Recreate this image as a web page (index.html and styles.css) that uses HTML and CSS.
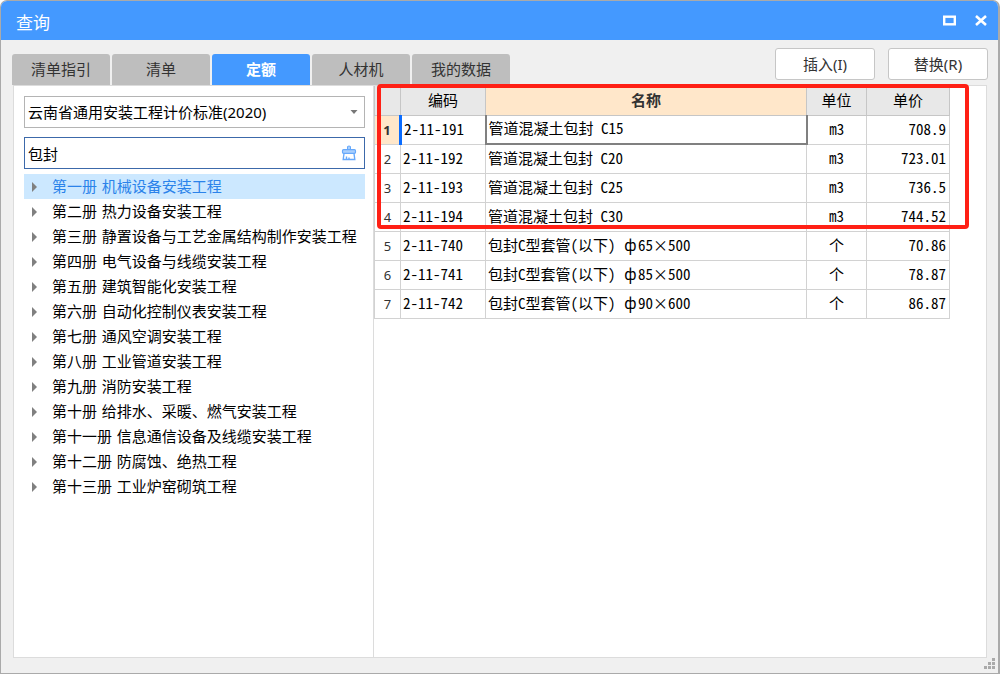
FILE: index.html
```html
<!DOCTYPE html>
<html lang="zh-CN">
<head>
<meta charset="utf-8">
<title>查询</title>
<link rel="stylesheet" href="styles.css">
</head>
<body>
<div class="window">
  <header class="titlebar">
    <h1 class="title">查询</h1>
    <div class="window-controls">
      <button class="control" type="button" aria-label="最大化"><svg width="14" height="14" viewBox="0 0 14 14"><rect x="2.200" y="2.700" width="10.600" height="7.600" fill="none" stroke="#fff" stroke-width="2.400"/></svg></button>
      <button class="control" type="button" aria-label="关闭"><svg width="14" height="14" viewBox="0 0 14 14"><path d="M2 2L12 11M12 2L2 11" stroke="#fff" stroke-width="2.600" fill="none"/></svg></button>
    </div>
  </header>

  <div class="toolbar">
    <nav class="tabs" role="tablist">
      <button class="tab" type="button" role="tab">清单指引</button>
      <button class="tab" type="button" role="tab">清单</button>
      <button class="tab active" type="button" role="tab" aria-selected="true">定额</button>
      <button class="tab" type="button" role="tab">人材机</button>
      <button class="tab" type="button" role="tab">我的数据</button>
    </nav>
    <div class="actions">
      <button class="action" type="button">插入(I)</button>
      <button class="action" type="button">替换(R)</button>
    </div>
  </div>

  <main class="panel">
    <aside class="sidebar">
      <div class="field">
        <select class="input" aria-label="标准"><option>云南省通用安装工程计价标准(2020)</option></select>
        <svg class="caret" width="8" height="5" viewBox="0 0 8 5"><path d="M0.500 0h7L4 4z" fill="#777"/></svg>
      </div>
      <div class="field">
        <input class="input search" type="text" value="包封" aria-label="搜索">
        <button class="clear" type="button" aria-label="清除">
          <svg width="16" height="16" viewBox="0 0 16 16" fill="none" stroke="#67a9fb"><path d="M6.500 5V1.500q1.500-1 3 0V5" fill="#a9cffd"/><rect x="1.500" y="4.700" width="13" height="3.600" rx="1" fill="#a9cffd" stroke-width="1.200"/><path d="M3 8.500L2.200 14.500h11.600L13 8.500M5.500 14v-2.500M8 14v-1.500" stroke-width="1.400"/></svg>
        </button>
      </div>
      <ul class="tree">
        <li class="node selected">第一册 机械设备安装工程</li>
        <li class="node">第二册 热力设备安装工程</li>
        <li class="node">第三册 静置设备与工艺金属结构制作安装工程</li>
        <li class="node">第四册 电气设备与线缆安装工程</li>
        <li class="node">第五册 建筑智能化安装工程</li>
        <li class="node">第六册 自动化控制仪表安装工程</li>
        <li class="node">第七册 通风空调安装工程</li>
        <li class="node">第八册 工业管道安装工程</li>
        <li class="node">第九册 消防安装工程</li>
        <li class="node">第十册 给排水、采暖、燃气安装工程</li>
        <li class="node">第十一册 信息通信设备及线缆安装工程</li>
        <li class="node">第十二册 防腐蚀、绝热工程</li>
        <li class="node">第十三册 工业炉窑砌筑工程</li>
      </ul>
    </aside>

    <section class="results">
      <table class="grid">
        <colgroup><col class="col-no"><col class="col-code"><col><col class="col-unit"><col class="col-price"></colgroup>
        <thead>
          <tr><th></th><th>编码</th><th class="sorted">名称</th><th>单位</th><th>单价</th></tr>
        </thead>
        <tbody>
          <tr class="current"><th>1</th><td>2-11-191</td><td class="name">管道混凝土包封 C15</td><td class="unit">m3</td><td class="price">708.9</td></tr>
          <tr><th>2</th><td>2-11-192</td><td class="name">管道混凝土包封 C20</td><td class="unit">m3</td><td class="price">723.01</td></tr>
          <tr><th>3</th><td>2-11-193</td><td class="name">管道混凝土包封 C25</td><td class="unit">m3</td><td class="price">736.5</td></tr>
          <tr><th>4</th><td>2-11-194</td><td class="name">管道混凝土包封 C30</td><td class="unit">m3</td><td class="price">744.52</td></tr>
          <tr><th>5</th><td>2-11-740</td><td class="name">包封C型套管(以下) <span class="wide">ф</span>65<span class="wide">×</span>500</td><td class="unit">个</td><td class="price">70.86</td></tr>
          <tr><th>6</th><td>2-11-741</td><td class="name">包封C型套管(以下) <span class="wide">ф</span>85<span class="wide">×</span>500</td><td class="unit">个</td><td class="price">78.87</td></tr>
          <tr><th>7</th><td>2-11-742</td><td class="name">包封C型套管(以下) <span class="wide">ф</span>90<span class="wide">×</span>600</td><td class="unit">个</td><td class="price">86.87</td></tr>
        </tbody>
      </table>
      <div class="highlight"></div>
    </section>
  </main>
  <svg class="grip" width="12" height="12" viewBox="0 0 12 12" fill="#aaa"><path d="M8 0h3v3H8zM4 4h3v3H4zM8 4h3v3H8zM0 8h3v3H0zM4 8h3v3H4zM8 8h3v3H8z"/></svg>
</div>
</body>
</html>
```

FILE: styles.css
```css
* { box-sizing: border-box; }

body {
  margin: 0;
  background: #fff;
  color: #000;
  font: 15px/24px "Noto Sans", "Noto Sans CJK SC", sans-serif;
}

button, input, select { font: inherit; color: inherit; }
button { padding: 0; border: 0; background: none; }
svg { display: block; }

.window {
  position: relative;
  display: flex;
  flex-direction: column;
  min-height: 100vh;
  padding-bottom: 15px;
  border: 1px solid #aaa;
  border-right-width: 2px;
  border-radius: 7px 7px 0 0;
  background: #f0f0f0;
  overflow: hidden;
}

.titlebar {
  display: flex;
  align-items: center;
  justify-content: space-between;
  height: 39px;
  padding: 4px 10px 0 15px;
  background: #4499ff;
  color: #fff;
}
.title { margin: 0; font-size: 17px; font-weight: 400; }
.window-controls { display: flex; gap: 18px; padding-bottom: 4px; }

.toolbar {
  display: flex;
  justify-content: space-between;
  padding: 8px 10px 0 11px;
}
.tabs { display: flex; gap: 2px; padding-top: 6px; }
.tab {
  width: 98px;
  height: 31px;
  padding-bottom: 2px;
  border-radius: 3px 3px 0 0;
  background: #bebebe;
  color: #333;
}
.tab.active { background: #4499ff; color: #fff; font-weight: 700; }
.actions { display: flex; gap: 13px; }
.action {
  width: 100px;
  height: 32px;
  border: 1px solid #c6c6c6;
  border-radius: 3px;
  background: #fff;
  color: #333;
}

.panel {
  flex: 1;
  display: flex;
  margin: 0 11px 0 12px;
  border: 1px solid #dcdcdc;
  background: #fff;
}

.sidebar {
  flex: 0 0 360px;
  padding: 10px 8px 0 10px;
  border-right: 1px solid #dcdcdc;
}
.field { position: relative; margin-bottom: 9px; }
.field + .field { margin-bottom: 5px; }
.input {
  display: block;
  width: 100%;
  height: 32px;
  padding: 0 28px 0 3px;
  border: 1px solid #b4b4b4;
  border-radius: 0;
  outline: 0;
  background: #fff;
  appearance: none;
}
.search { border-color: #3c69aa; }
.caret { position: absolute; right: 7px; top: 14px; }
.clear { position: absolute; right: 8px; top: 8px; }

.tree {
  margin: 0;
  padding: 0;
  list-style: none;
  font-family: "DejaVu Sans", "Noto Sans CJK SC", sans-serif;
}
.node {
  display: flex;
  align-items: center;
  gap: 15px;
  height: 25px;
  padding-left: 8px;
  white-space: nowrap;
}
.node::before {
  content: "";
  border: solid transparent;
  border-width: 5px 0 5px 5px;
  border-left-color: #808080;
}
.selected { background: #cce8ff; color: #2b83ea; }

.results { position: relative; flex: 1; padding-right: 36px; }
.grid {
  width: 100%;
  border-collapse: collapse;
  table-layout: fixed;
}
.col-no { width: 26px; }
.col-code { width: 85px; }
.col-unit { width: 60px; }
.col-price { width: 83px; }
.grid th, .grid td {
  height: 29px;
  padding: 0 2px;
  border: 1px solid #d2d2d2;
  line-height: 20px;
  white-space: nowrap;
}
.grid td {
  padding-bottom: 2px;
  font-family: "Noto Sans CJK SC", sans-serif;
  font-feature-settings: "hwid";
}
.grid th { font-weight: 400; }
.grid thead th { background: #e8e8e8; border-color: #c6c6c6; border-top: 0; }
.grid thead .sorted { background: #ffe7ca; font-weight: 700; color: #333; }
.grid tbody th { font-size: 13px; color: #333; }
.grid .current th {
  background: #ffe7ca;
  border-right: 3px solid #0a6cff;
  font-weight: 700;
}
.grid .current .name { border: 2px solid #808080; border-top: 1px solid #4d90e0; }
.grid .wide { display: inline-block; width: 15px; text-align: center; }
.grid .unit { text-align: center; }
.grid .price { text-align: right; padding-right: 3px; }

.highlight {
  position: absolute;
  left: 3px;
  right: 17px;
  top: -2px;
  height: 145px;
  border: 4px solid #ff2015;
  border-radius: 4px;
  pointer-events: none;
}

.grip { position: absolute; right: 2px; bottom: 3px; }
```
